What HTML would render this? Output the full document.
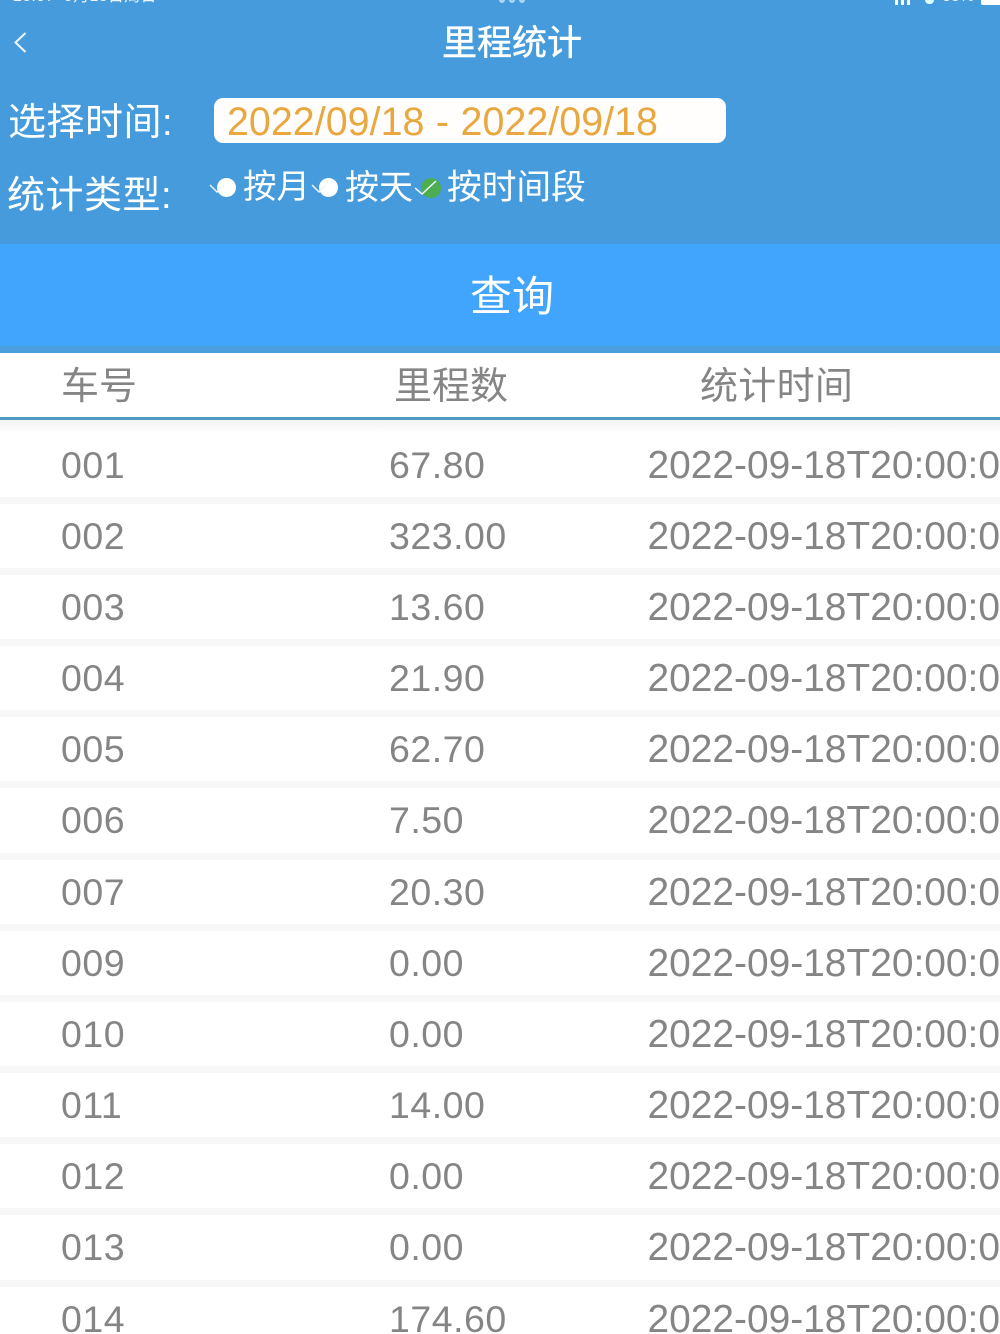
<!DOCTYPE html>
<html lang="zh"><head><meta charset="utf-8"><title>里程统计</title>
<style>
html,body{margin:0;padding:0;background:#fff}
#p{position:relative;width:1000px;height:1334px;overflow:hidden;background:#fff;font-family:"Liberation Sans","Noto Sans CJK SC",sans-serif;filter:blur(.35px)}
#p div,#p span{position:absolute;white-space:nowrap}
.t{color:#fff;line-height:1}
.h{color:#858585;font-size:38px;line-height:1;top:367.500px}
.sep{left:0;width:1000px;height:7px;background:#f7f7f7}
.n{color:#858585;font-size:37.5px;line-height:44px;height:44px;letter-spacing:.5px}
.d{left:647.500px;font-size:38.9px;letter-spacing:0;margin-top:1px}
.a{left:61px}
.b{left:389px}
</style></head><body><div id="p">
<div style="left:0;top:0;width:1000px;height:244px;background:#459bdb"></div>
<div class="t" style="left:13px;top:-11px;font-size:16px;letter-spacing:.3px;opacity:.9">20:07&nbsp; 9月18日周日</div>
<div style="left:499px;top:0;width:6px;height:3px;background:#a9d5f2;border-radius:0 0 3px 3px"></div>
<div style="left:509px;top:0;width:6px;height:3px;background:#a9d5f2;border-radius:0 0 3px 3px"></div>
<div style="left:519px;top:0;width:6px;height:3px;background:#a9d5f2;border-radius:0 0 3px 3px"></div>
<div style="left:895px;top:0;width:3px;height:5px;background:#fff"></div>
<div style="left:901px;top:0;width:3px;height:5px;background:#fff"></div>
<div style="left:907px;top:0;width:3px;height:5px;background:#fff"></div>
<div style="left:925px;top:0;width:9px;height:4px;background:#dff;border-radius:0 0 5px 5px"></div>
<div class="t" style="left:942px;top:-11px;font-size:16px;opacity:.9">88%</div>
<div style="left:981px;top:0;width:19px;height:5px;background:#fff;border-radius:0 0 0 2px"></div>
<svg style="position:absolute;left:10px;top:28px" width="22" height="28" viewBox="0 0 22 28"><path d="M15.500 5 L5.500 14.500 L15.500 24" fill="none" stroke="#eef6fc" stroke-width="2"/></svg>
<div class="t" style="left:442px;top:25.500px;font-size:35px;-webkit-text-stroke:.5px #fff">里程统计</div>
<div class="t" style="left:8px;top:103.500px;font-size:38px;letter-spacing:.5px">选择时间:</div>
<div style="left:214px;top:98px;width:512px;height:45px;background:#fffefc;border-radius:9px"></div>
<div style="left:227px;top:100px;font-size:39.4px;line-height:44px;color:#e9a73f;word-spacing:.5px;letter-spacing:.03px">2022/09/18 - 2022/09/18</div>
<div class="t" style="left:7px;top:177px;font-size:38px;letter-spacing:.5px">统计类型:</div>
<div style="left:217px;top:178px;width:19px;height:19px;border-radius:50%;background:#fff"></div>
<div style="left:319px;top:178px;width:19px;height:19px;border-radius:50%;background:#fff"></div>
<div style="left:421px;top:178px;width:20px;height:20px;border-radius:50%;background:#4cae50"></div>
<svg style="position:absolute;left:205px;top:175px" width="240" height="24" viewBox="0 0 240 24"><path d="M5 10 L12 17 L19 10M107 10 L114 17 L121 10M210 13 L217 19 L231 6" fill="none" stroke="#eef6fc" stroke-width="1.500"/></svg>
<div class="t" style="left:243px;top:171px;font-size:33.500px">按月</div>
<div class="t" style="left:345px;top:171px;font-size:34px">按天</div>
<div class="t" style="left:447px;top:171px;font-size:34.700px">按时间段</div>
<div style="left:0;top:244px;width:1000px;height:102px;background:#42a5fd"></div>
<div style="left:0;top:346px;width:1000px;height:7px;background:#4a9fdf"></div>
<div class="t" style="left:470px;top:275.500px;font-size:42px">查询</div>
<div class="h" style="left:61px">车号</div>
<div class="h" style="left:394px">里程数</div>
<div class="h" style="left:700px;letter-spacing:.3px">统计时间</div>
<div style="left:0;top:417px;width:1000px;height:3px;background:#4f9bbf"></div>
<div style="left:0;top:420px;width:1000px;height:14px;background:linear-gradient(#f3f3f3,#fff)"></div>

<div class="sep" style="top:497px"></div><div class="sep" style="top:568px"></div><div class="sep" style="top:639px"></div><div class="sep" style="top:710px"></div><div class="sep" style="top:781px"></div><div class="sep" style="top:853px"></div><div class="sep" style="top:924px"></div><div class="sep" style="top:995px"></div><div class="sep" style="top:1066px"></div><div class="sep" style="top:1137px"></div><div class="sep" style="top:1208px"></div><div class="sep" style="top:1280px"></div>

<div class="n a" style="top:443px">001</div><div class="n b" style="top:443px">67.80</div><div class="n d" style="top:443px">2022-09-18T20:00:0</div>
<div class="n a" style="top:514px">002</div><div class="n b" style="top:514px">323.00</div><div class="n d" style="top:514px">2022-09-18T20:00:0</div>
<div class="n a" style="top:585px">003</div><div class="n b" style="top:585px">13.60</div><div class="n d" style="top:585px">2022-09-18T20:00:0</div>
<div class="n a" style="top:656px">004</div><div class="n b" style="top:656px">21.90</div><div class="n d" style="top:656px">2022-09-18T20:00:0</div>
<div class="n a" style="top:727px">005</div><div class="n b" style="top:727px">62.70</div><div class="n d" style="top:727px">2022-09-18T20:00:0</div>
<div class="n a" style="top:798px">006</div><div class="n b" style="top:798px">7.50</div><div class="n d" style="top:798px">2022-09-18T20:00:0</div>
<div class="n a" style="top:870px">007</div><div class="n b" style="top:870px">20.30</div><div class="n d" style="top:870px">2022-09-18T20:00:0</div>
<div class="n a" style="top:941px">009</div><div class="n b" style="top:941px">0.00</div><div class="n d" style="top:941px">2022-09-18T20:00:0</div>
<div class="n a" style="top:1012px">010</div><div class="n b" style="top:1012px">0.00</div><div class="n d" style="top:1012px">2022-09-18T20:00:0</div>
<div class="n a" style="top:1083px">011</div><div class="n b" style="top:1083px">14.00</div><div class="n d" style="top:1083px">2022-09-18T20:00:0</div>
<div class="n a" style="top:1154px">012</div><div class="n b" style="top:1154px">0.00</div><div class="n d" style="top:1154px">2022-09-18T20:00:0</div>
<div class="n a" style="top:1225px">013</div><div class="n b" style="top:1225px">0.00</div><div class="n d" style="top:1225px">2022-09-18T20:00:0</div>
<div class="n a" style="top:1297px">014</div><div class="n b" style="top:1297px">174.60</div><div class="n d" style="top:1297px">2022-09-18T20:00:0</div>
</div></body></html>
